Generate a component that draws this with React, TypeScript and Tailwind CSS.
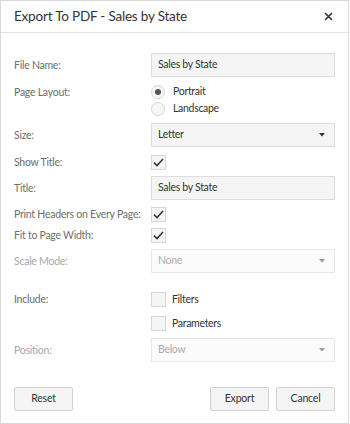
import { ReactNode } from "react";

const font = { fontFamily: 'Lato, "Open Sans", sans-serif' };

const Label = ({ children, muted }: { children: ReactNode; muted?: boolean }) => (
    <div
        className={`w-[137px] shrink-0 whitespace-nowrap text-[10.5px] tracking-[-0.25px] leading-[15px] ${
            muted ? "text-[#a8a8a8]" : "text-[#6e6e6e]"
        }`}
    >
        {children}
    </div>
);

const TextBox = ({ value }: { value: string }) => (
    <div className="w-[184px] h-[24px] flex items-center px-[6px] bg-[#f5f5f5] border border-[#dedede] text-[10.5px] tracking-[-0.3px] text-[#333]">
        {value}
    </div>
);

const Select = ({ value, disabled }: { value: string; disabled?: boolean }) => (
    <div
        className={`w-[184px] h-[24px] flex items-center justify-between px-[6px] border text-[10.5px] tracking-[-0.3px] ${
            disabled
                ? "bg-[#fbfbfb] border-[#e8e8e8] text-[#adadad]"
                : "bg-[#f5f5f5] border-[#dedede] text-[#333]"
        }`}
    >
        <span>{value}</span>
        <svg width="6" height="4" viewBox="0 0 6 4" className="mr-[3px]">
            <path d="M0 0 H6 L3 3.5 Z" fill={disabled ? "#9a9a9a" : "#333"} />
        </svg>
    </div>
);

const Check = ({ checked }: { checked?: boolean }) => (
    <div className="w-[15px] h-[15px] shrink-0 flex items-center justify-center bg-[#f5f5f5] border border-[#d6d6d6]">
        {checked && (
            <svg width="11" height="9" viewBox="0 0 11 9">
                <path d="M1 4.6 L4 7.6 L10 1" fill="none" stroke="#333" strokeWidth="1.5" />
            </svg>
        )}
    </div>
);

const Radio = ({ checked }: { checked?: boolean }) => (
    <div className="w-[14px] h-[14px] shrink-0 rounded-full flex items-center justify-center bg-[#f7f7f7] border border-[#d6d6d6]">
        {checked && <div className="w-[6px] h-[6px] rounded-full bg-[#555]" />}
    </div>
);

const Button = ({ children }: { children: ReactNode }) => (
    <button className="w-[59px] h-[24px] flex items-center justify-center bg-[#f5f5f5] border border-[#d2d2d2] rounded-[2px] text-[10.5px] tracking-[-0.2px] text-[#333]">
        {children}
    </button>
);

export default function App() {
    return (
        <div style={font} className="w-[350px] h-[424px] bg-white">
            <div className="w-[349px] h-[424px] border border-[#d9d9d9] flex flex-col">
                <div className="h-[32px] shrink-0 flex items-center justify-between pl-[13px] pr-[15px] border-b border-[#e3e3e3]">
                    <span className="text-[13.5px] tracking-[-0.2px] text-[#333] whitespace-nowrap">
                        Export To PDF - Sales by State
                    </span>
                    <svg width="9" height="9" viewBox="0 0 9 9">
                        <path d="M1 1 L8 8 M8 1 L1 8" stroke="#333" strokeWidth="1.6" />
                    </svg>
                </div>

                <div className="flex flex-col pl-[13px] pt-[20px]">
                    <div className="flex items-center">
                        <Label>File Name:</Label>
                        <TextBox value="Sales by State" />
                    </div>

                    <div className="flex mt-[7px]">
                        <div className="pt-[1px]">
                            <Label>Page Layout:</Label>
                        </div>
                        <div className="flex flex-col">
                            <div className="h-[16px] flex items-center gap-[8px] text-[10.5px] tracking-[-0.3px] text-[#333]">
                                <Radio checked />
                                Portrait
                            </div>
                            <div className="h-[17px] flex items-center gap-[8px] text-[10.5px] tracking-[-0.3px] text-[#333]">
                                <Radio />
                                Landscape
                            </div>
                        </div>
                    </div>

                    <div className="flex items-center mt-[6px]">
                        <Label>Size:</Label>
                        <Select value="Letter" />
                    </div>

                    <div className="flex items-center mt-[8px]">
                        <Label>Show Title:</Label>
                        <Check checked />
                    </div>

                    <div className="flex items-center mt-[6px]">
                        <Label>Title:</Label>
                        <TextBox value="Sales by State" />
                    </div>

                    <div className="flex items-center mt-[7px]">
                        <Label>Print Headers on Every Page:</Label>
                        <Check checked />
                    </div>

                    <div className="flex items-center mt-[6px]">
                        <Label>Fit to Page Width:</Label>
                        <Check checked />
                    </div>

                    <div className="flex items-center mt-[6px]">
                        <Label muted>Scale Mode:</Label>
                        <Select value="None" disabled />
                    </div>

                    <div className="flex items-center mt-[19px]">
                        <Label>Include:</Label>
                        <div className="flex items-center gap-[6px] text-[10.5px] tracking-[-0.3px] leading-[15px] text-[#333]">
                            <Check />
                            Filters
                        </div>
                    </div>

                    <div className="flex items-center mt-[9px]">
                        <div className="w-[137px]" />
                        <div className="flex items-center gap-[6px] text-[10.5px] tracking-[-0.3px] leading-[15px] text-[#333]">
                            <Check />
                            Parameters
                        </div>
                    </div>

                    <div className="flex items-center mt-[7px]">
                        <Label muted>Position:</Label>
                        <Select value="Below" disabled />
                    </div>
                </div>

                <div className="flex items-center pl-[13px] pr-[13px] mt-[25px]">
                    <Button>Reset</Button>
                    <div className="flex-1" />
                    <Button>Export</Button>
                    <div className="w-[7px]" />
                    <Button>Cancel</Button>
                </div>
            </div>
        </div>
    );
}
